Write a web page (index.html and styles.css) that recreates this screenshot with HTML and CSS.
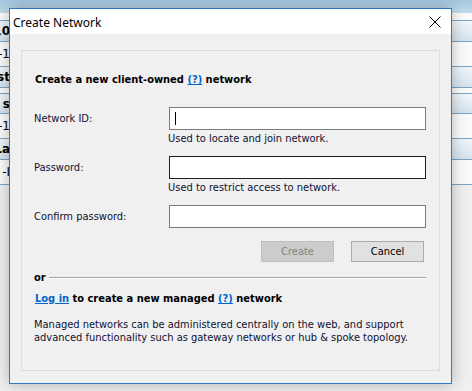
FILE: index.html
```html
<!DOCTYPE html>
<html>
<head>
<meta charset="utf-8">
<link rel="stylesheet" href="styles.css">
</head>
<body>
<div class="desktop">
  <div class="bgwin">
    <div class="bg-top"></div>
    <div class="bg-row white h8"></div>
    <div class="bg-row grad bold h21"><span class="cell"><span>10</span></span></div>
    <div class="bg-row white h25"><span class="cell"><span>-1</span></span></div>
    <div class="bg-row grad bold h21"><span class="cell"><span>st</span></span></div>
    <div class="bg-row white h6"></div>
    <div class="bg-row grad bold h20"><span class="cell"><span>s</span></span></div>
    <div class="bg-row white h25"><span class="cell"><span>-1</span></span></div>
    <div class="bg-row grad bold h21"><span class="cell"><span>La</span></span></div>
    <div class="bg-row white h25"><span class="cell"><span>-I</span></span></div>
    <div class="bg-rest"></div>
  </div>

  <div class="dialog">
    <div class="titlebar">
      <span class="title">Create Network</span>
      <svg class="close" width="12" height="12" viewBox="0 0 12 12"><path d="M0.5 0.5 L11.5 11.5 M11.5 0.5 L0.5 11.5" stroke="#000" stroke-width="1" fill="none"/></svg>
    </div>
    <div class="body">
      <div class="group">
        <div class="heading">Create a new client-owned <a class="link">(?)</a> network</div>

        <div class="field">
          <span class="label">Network ID:</span>
          <div class="input"><span class="caret"></span></div>
          <span class="help">Used to locate and join network.</span>
        </div>
        <div class="field">
          <span class="label">Password:</span>
          <div class="input dark"></div>
          <span class="help">Used to restrict access to network.</span>
        </div>
        <div class="field last">
          <span class="label">Confirm password:</span>
          <div class="input"></div>
        </div>

        <div class="buttons">
          <div class="btn disabled">Create</div>
          <div class="btn">Cancel</div>
        </div>

        <div class="or"><span>or</span><span class="rule"></span></div>

        <div class="heading managed"><a class="link">Log in</a> to create a new managed <a class="link">(?)</a> network</div>

        <p class="desc">Managed networks can be administered centrally on the web, and support advanced functionality such as gateway networks or hub &amp; spoke topology.</p>
      </div>
    </div>
  </div>
</div>
</body>
</html>
```

FILE: styles.css
```css
* { box-sizing: border-box; }
html, body { margin: 0; padding: 0; }
body {
  width: 472px;
  height: 391px;
  overflow: hidden;
  background: #f0f0f0;
  font-family: "DejaVu Sans Condensed", "DejaVu Sans", sans-serif;
  font-size: 11px;
  color: #000;
}
.desktop {
  position: relative;
  width: 472px;
  height: 391px;
  overflow: hidden;
}
.bgwin {
  display: flex;
  flex-direction: column;
  height: 100%;
}
.bg-top {
  height: 13px;
  background: linear-gradient(#a4c7df, #c3dbeb);
  flex: none;
}
.bg-row {
  flex: none;
  display: flex;
  align-items: center;
  border-bottom: 1px solid #7aa5c7;
}
.bg-row.white { background: #fbfbfb; }
.bg-row.grad { background: linear-gradient(#f2f6f9, #d4e3ee); }
.bg-row.bold { font-weight: bold; }
.h6 { height: 6px; }
.h8 { height: 8px; }
.h20 { height: 20px; }
.h21 { height: 21px; }
.h25 { height: 25px; }
.cell {
  width: 10px;
  display: flex;
  justify-content: flex-end;
  overflow: hidden;
  white-space: nowrap;
  font-family: "DejaVu Sans", sans-serif;
  font-size: 12px;
}
.bg-rest { flex: 1; background: #f0f0f0; }

.dialog {
  position: absolute;
  left: 9px;
  top: 8px;
  width: 443px;
  height: 376px;
  border: 1px solid #2a7ac8;
  background: #f0f0f0;
  box-shadow: 0 0 14px rgba(0,0,0,0.28);
  display: flex;
  flex-direction: column;
}
.titlebar {
  height: 25px;
  background: #fff;
  display: flex;
  align-items: center;
  justify-content: space-between;
  padding: 0 10px 0 3px;
  flex: none;
}
.title {
  font-family: "Noto Sans", sans-serif;
  font-size: 12px;
  color: #000;
  padding-top: 1px;
}
.close { display: block; margin-top: 1px; }
.body {
  flex: 1;
  padding: 16px 11px 12px 11px;
  display: flex;
}
.group {
  flex: 1;
  border: 1px solid #dcdcdc;
  padding: 22px 12px 0 12px;
  display: flex;
  flex-direction: column;
}
.heading {
  font-weight: bold;
  line-height: 14px;
  padding-left: 1px;
}
.link {
  color: #0066cc;
  text-decoration: underline;
}
.field {
  display: grid;
  grid-template-columns: 135px 257px;
  align-items: center;
  margin-top: 10px;
}
.heading + .field { margin-top: 20px; }
.label { line-height: 14px; color: #101030; }
.input {
  height: 23px;
  background: #fff;
  border: 1px solid #7a7a7a;
  position: relative;
  display: flex;
  align-items: center;
  padding-left: 5px;
}
.input.dark { border-color: #1e1e1e; }
.caret {
  width: 1px;
  height: 13px;
  background: #000;
}
.help {
  grid-column: 2;
  line-height: 14px;
  margin-top: 2px;
  margin-left: -1px;
  color: #101030;
}
.buttons {
  display: flex;
  justify-content: flex-end;
  gap: 17px;
  margin-top: 13px;
  padding-right: 3px;
}
.btn {
  width: 73px;
  height: 21px;
  border: 1px solid #adadad;
  background: #e1e1e1;
  display: flex;
  align-items: center;
  justify-content: center;
}
.btn.disabled {
  border-color: #bfbfbf;
  background: #cccccc;
  color: #838383;
}
.or {
  display: flex;
  align-items: center;
  gap: 3px;
  margin-top: 9px;
  line-height: 14px;
  font-weight: bold;
  padding-right: 1px;
}
.rule {
  flex: 1;
  height: 2px;
  border-top: 1px solid #a0a0a0;
  border-bottom: 1px solid #fff;
  margin-top: -1px;
}
.managed { margin-top: 7px; }
.desc {
  margin: 12px 0 0 0;
  line-height: 13px;
  color: #101030;
}
```
